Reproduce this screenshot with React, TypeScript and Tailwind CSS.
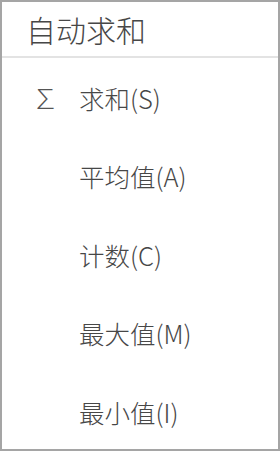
const items = [
    { label: '求和(S)', icon: true },
    { label: '平均值(A)' },
    { label: '计数(C)' },
    { label: '最大值(M)' },
    { label: '最小值(I)' },
]

export default function App() {
    return (
        <div
            className="w-[280px] h-[451px] bg-white border-2 border-[#a5a5a5] flex flex-col text-[#474747]"
            style={{ fontFamily: '"Noto Sans CJK SC", "Noto Sans", sans-serif' }}
        >
            {/* Title */}
            <div className="h-[56px] flex items-center pl-[24px] border-b-2 border-[#e3e3e3] shrink-0">
                <span className="text-[30px] leading-none font-light">自动求和</span>
            </div>

            {/* Menu items */}
            <div className="flex flex-col">
                {items.map((item) => (
                    <div key={item.label} className="h-[78.5px] flex items-center">
                        <span className="w-[77px] pl-[30px] text-[27px] leading-none font-extralight text-[#555555]">
                            {item.icon ? '∑' : ''}
                        </span>
                        <span className="text-[25.5px] leading-none font-light">{item.label}</span>
                    </div>
                ))}
            </div>
        </div>
    )
}
